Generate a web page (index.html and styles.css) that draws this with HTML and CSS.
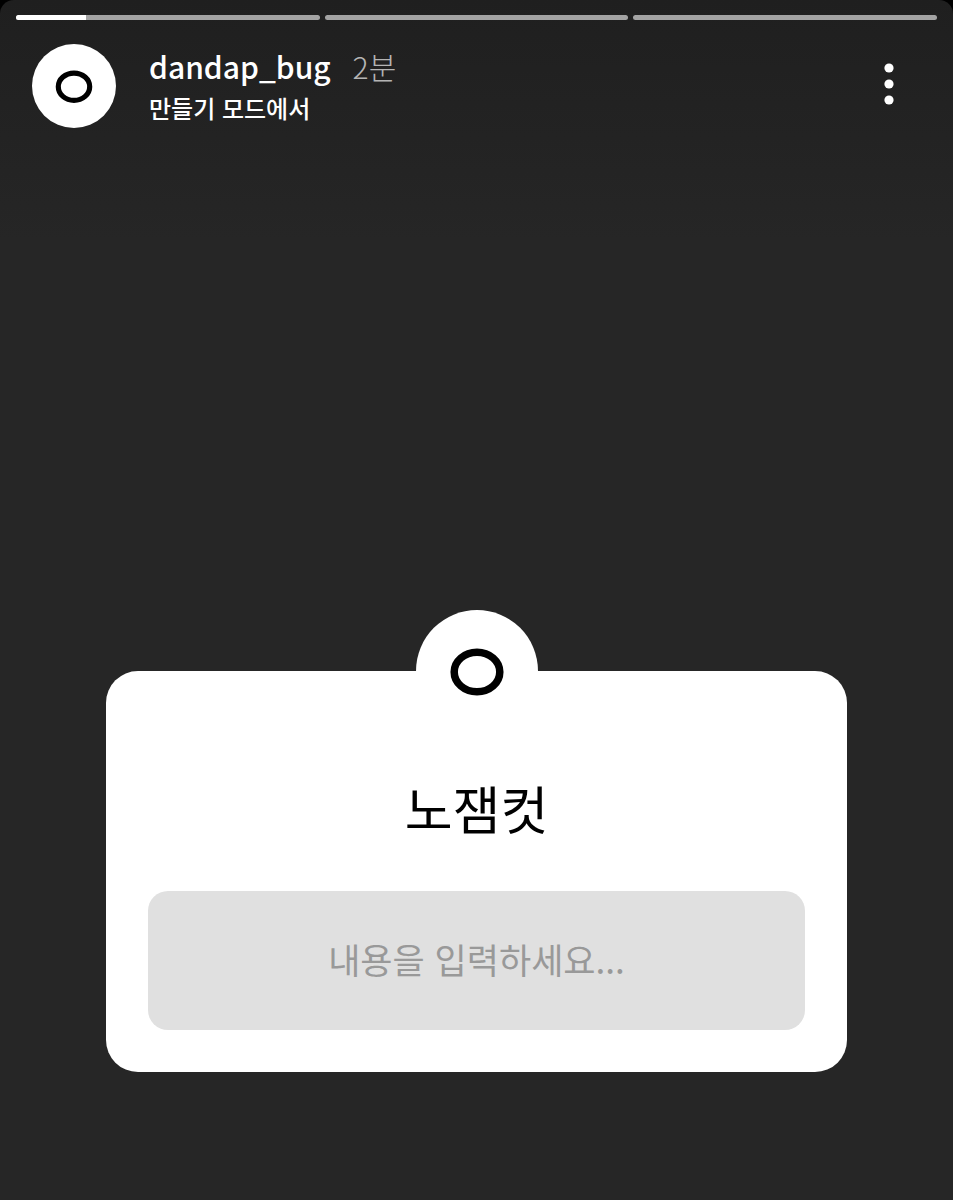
FILE: index.html
```html
<!DOCTYPE html>
<html lang="ko">

<head>
<meta charset="utf-8">
<meta name="viewport" content="width=device-width, initial-scale=1">
<title>dandap_bug</title>
<link rel="stylesheet" href="styles.css">
</head>

<body>

<main class="story">
  <div class="progress">
    <div class="bar"><div class="fill" style="width: 23%"></div></div>
    <div class="bar"></div>
    <div class="bar"></div>
  </div>

  <header class="header">
    <svg class="avatar" viewBox="0 0 122 122" aria-hidden="true">
      <circle cx="61" cy="61" r="61" fill="#fff"/>
      <ellipse cx="61" cy="62" rx="22.8" ry="19.8" fill="none" stroke="#000" stroke-width="7.5"/>
    </svg>
    <div class="info">
      <div class="user">
        <a class="name" href="#">dandap_bug</a>
        <span class="time">2분</span>
      </div>
      <a class="source" href="#">만들기 모드에서</a>
    </div>
    <button class="more" type="button" aria-label="더 보기">
      <svg class="dots" viewBox="0 0 10 42" aria-hidden="true">
        <circle cx="5" cy="5" r="4.6"/>
        <circle cx="5" cy="21" r="4.6"/>
        <circle cx="5" cy="37" r="4.6"/>
      </svg>
    </button>
  </header>

  <form class="card">
    <svg class="badge" viewBox="0 0 122 122" aria-hidden="true">
      <circle cx="61" cy="61" r="61" fill="#fff"/>
      <ellipse cx="61" cy="62" rx="22.8" ry="19.8" fill="none" stroke="#000" stroke-width="7.5"/>
    </svg>
    <label class="question" for="answer">노잼컷</label>
    <input class="answer" id="answer" type="text" placeholder="내용을 입력하세요...">
  </form>
</main>

</body>
</html>
```

FILE: styles.css
```css
* {
	box-sizing: border-box;
}

body {
	margin: 0;
	background: #000;
	font-family: "Noto Sans CJK KR", sans-serif;
}

a {
	color: #fff;
	text-decoration: none;
}

.story {
	display: flex;
	flex-direction: column;
	min-height: 100vh;
	padding: 15px 16px 128px;
	border-radius: 14px 14px 0 0;
	background: linear-gradient(#1f1f1f, #262626 240px);
}

.progress {
	display: flex;
	gap: 5px;
}

.bar {
	flex: 1;
	height: 5px;
	border-radius: 3px;
	background: #a3a3a3;
	overflow: hidden;
}

.fill {
	height: 100%;
	background: #fff;
}

.header {
	display: flex;
	align-items: center;
	padding: 24px 38px 0 16px;
}

.avatar {
	width: 84px;
	height: 84px;
	margin-right: 33px;
}

.info {
	flex: 1;
}

.user {
	display: flex;
	align-items: baseline;
	gap: 22px;
	line-height: 44px;
}

.name {
	font-size: 30px;
	font-weight: 500;
}

.time {
	font-size: 30px;
	font-weight: 300;
	color: #b4b4b4;
}

.source {
	display: block;
	font-size: 24px;
	font-weight: 500;
	line-height: 40px;
}

.more {
	display: flex;
	padding: 0 5px 4px;
	border: 0;
	background: none;
}

.dots {
	width: 10px;
	height: 42px;
	fill: #fff;
}

.card {
	display: flex;
	flex-direction: column;
	align-items: center;
	margin: auto 90px 0;
	padding: 0 42px 42px;
	border-radius: 32px;
	background: #fff;
}

.badge {
	width: 122px;
	height: 122px;
	margin-top: -61px;
}

.question {
	margin: 36px 0 43px;
	font-size: 52px;
	line-height: 80px;
}

.answer {
	width: 100%;
	height: 139px;
	padding: 0 20px 4px;
	border: 0;
	border-radius: 20px;
	background: #e0e0e0;
	color: #000;
	font-family: inherit;
	font-size: 35px;
	text-align: center;
}

.answer::placeholder {
	color: #999;
}
```
